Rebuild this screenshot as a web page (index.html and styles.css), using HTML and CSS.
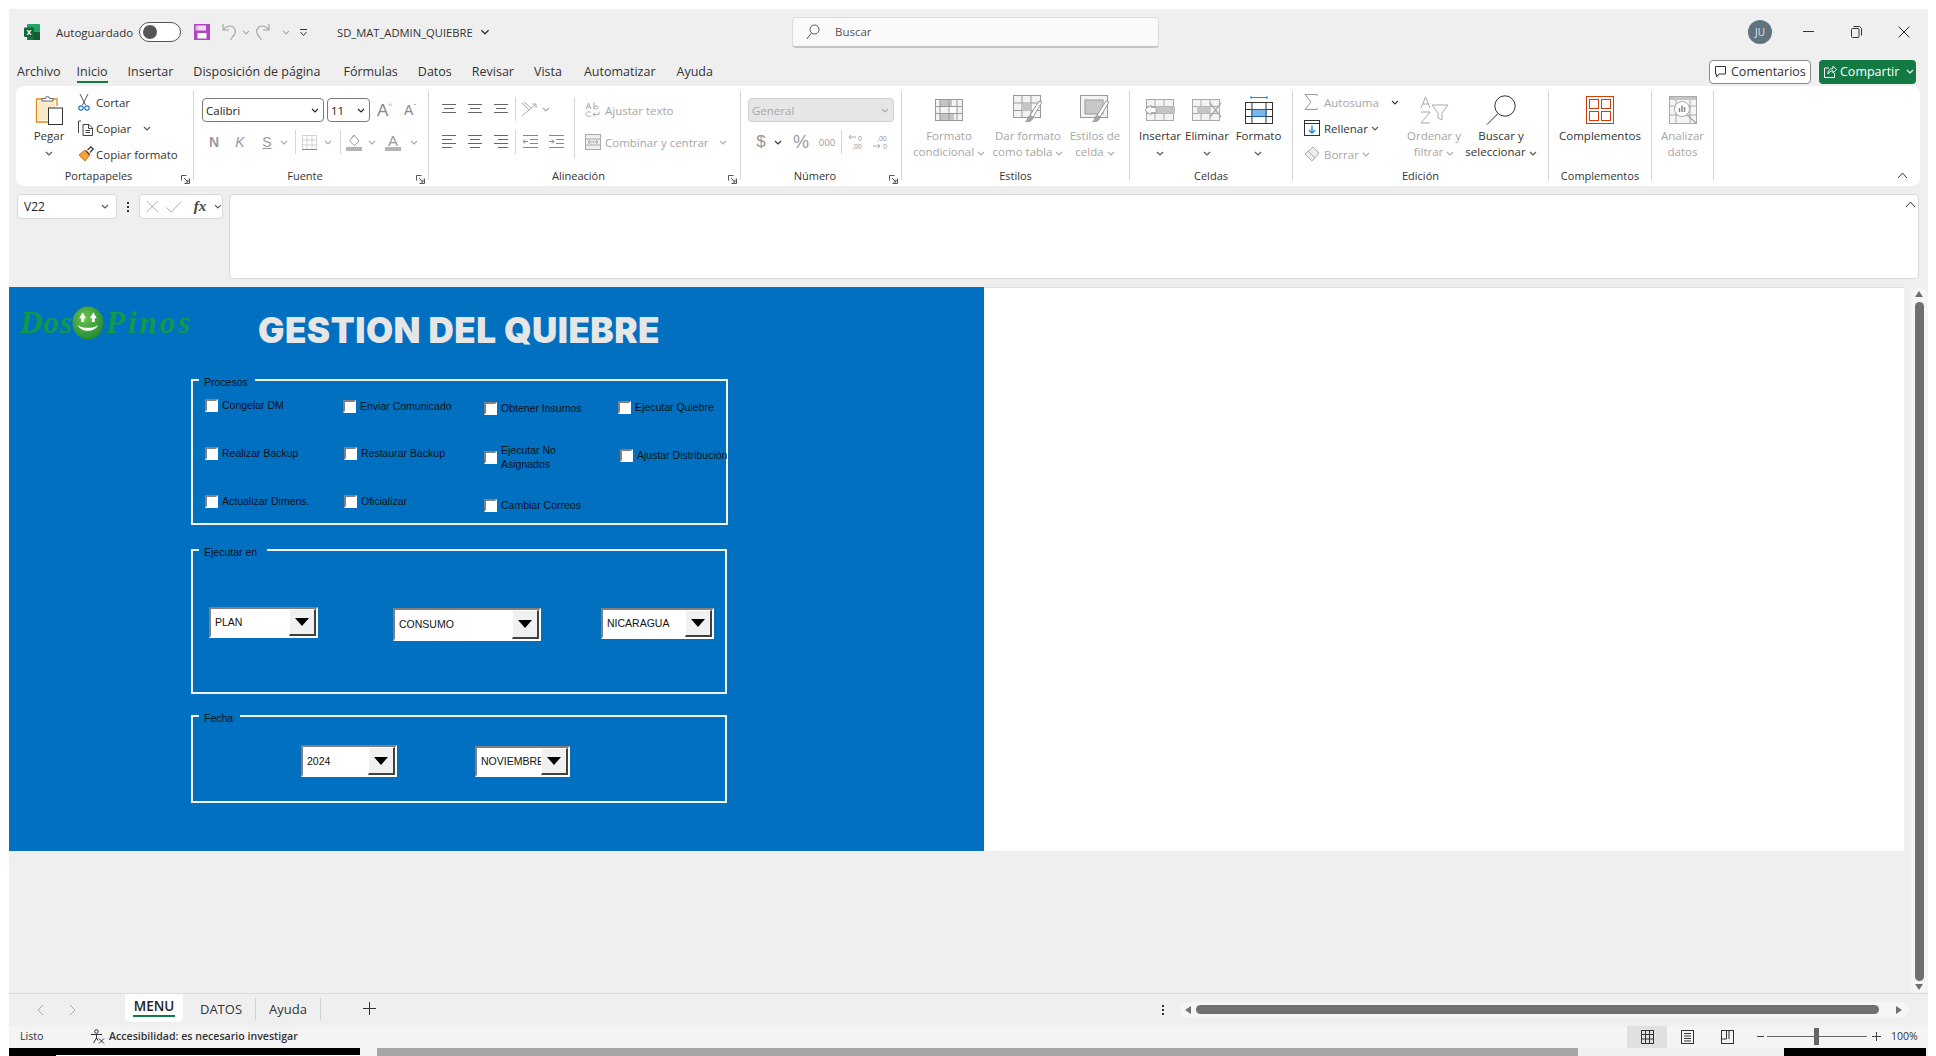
FILE: index.html
```html
<!DOCTYPE html>
<html lang="es">
<head>
    <meta charset="UTF-8">
    <title>SD_MAT_ADMIN_QUIEBRE - Excel</title>
    <link rel="stylesheet" href="styles.css">
</head>
<body>
    <!-- shared small icons -->
    <svg class="sprite">
        <symbol id="chev" viewBox="0 0 8 5"><polyline points="1,1 4,4 7,1" fill="none" stroke="currentColor" stroke-width="1.1"/></symbol>
        <symbol id="launch" viewBox="0 0 9 9"><path d="M.5 .5h5M.5 .5v5M8.5 3.5v5h-5M3 3l4 4M7 4.5v2.5h-2.5" fill="none" stroke="currentColor"/></symbol>
    </svg>

    <div class="window">
        <!-- title bar -->
        <header class="titlebar">
            <svg class="xl-logo" width="16" height="16" viewBox="0 0 16 16">
                <rect x="3" width="13" height="16" rx="1" fill="#21a366"/>
                <rect x="9" y="8" width="7" height="8" fill="#185c37"/>
                <rect x="3" y="8" width="6" height="8" fill="#107c41"/>
                <rect y="3.5" width="10" height="9.5" rx="1" fill="#0b6a37"/>
                <text x="2.5" y="11" class="xl-x">x</text>
            </svg>
            <span class="autosave">Autoguardado</span>
            <span class="toggle"><span class="toggle-dot"></span></span>
            <svg class="qa-save" width="16" height="16" viewBox="0 0 16 16"><rect width="16" height="16" fill="#b146c2"/><rect x="4" y="1.5" width="8" height="5" fill="#f3d9f7"/><rect x="1.5" y="1.5" width="2.5" height="5" fill="#e2b4ea"/><rect x="3.500" y="9" width="9" height="5.500" fill="#fff"/></svg>
            <svg class="qa-undo" width="16" height="18" viewBox="0 0 16 18" fill="none" stroke="#a3a3a3" stroke-width="1.1"><path d="M1 1v6h6M1.5 6.5C4 3 8 2 11 4c3.5 2.5 3 7-.5 10l-2 3"/></svg>
            <svg class="chev qa-c1 c-muted"><use href="#chev"/></svg>
            <svg class="qa-redo" width="16" height="18" viewBox="0 0 16 18" fill="none" stroke="#a3a3a3" stroke-width="1.1"><path d="M15 1v6H9M14.5 6.5C12 3 8 2 5 4 1.5 6.5 2 11 5.5 14l2 3"/></svg>
            <svg class="chev qa-c2 c-muted"><use href="#chev"/></svg>
            <svg class="qa-more" width="9" height="9" viewBox="0 0 9 9" fill="none" stroke="#333"><path d="M1 1.5h7M1.5 4l3 3.5 3-3.5"/></svg>
            <span class="filename">SD_MAT_ADMIN_QUIEBRE</span>
            <svg class="file-chev" width="10" height="6"><use href="#chev"/></svg>
            <div class="search">
                <svg width="14" height="16" viewBox="0 0 14 16" fill="none" stroke="#555"><circle cx="8.5" cy="5.5" r="4.500"/><path d="M5.5 9L.8 15"/></svg>
                <span>Buscar</span>
            </div>
            <span class="avatar">JU</span>
            <div class="winbtn"><svg width="11" height="2"><rect width="11" height="1" fill="#333"/></svg></div>
            <div class="winbtn"><svg width="11" height="12" viewBox="0 0 11 12" fill="none" stroke="#333"><rect x=".5" y="2.5" width="7.5" height="9" rx="1"/><path d="M2.5 .5h6l2 2v7"/></svg></div>
            <div class="winbtn"><svg width="12" height="12" viewBox="0 0 12 12" stroke="#333"><path d="M.5 .5l11 11M11.5 .5l-11 11"/></svg></div>
        </header>

        <!-- ribbon tabs -->
        <nav class="tabs">
            <span class="tab">Archivo</span>
            <span class="tab tab-active">Inicio</span>
            <span class="tab">Insertar</span>
            <span class="tab">Disposición de página</span>
            <span class="tab tab-formulas">Fórmulas</span>
            <span class="tab">Datos</span>
            <span class="tab">Revisar</span>
            <span class="tab">Vista</span>
            <span class="tab tab-auto">Automatizar</span>
            <span class="tab tab-help">Ayuda</span>
            <button class="btn-comments">
                <svg width="11" height="12" viewBox="0 0 11 12" fill="none" stroke="#333"><path d="M.5 .5h10v7.5H4L1.5 11V8h-1z"/></svg>
                Comentarios
            </button>
            <button class="btn-share">
                <svg width="13" height="13" viewBox="0 0 13 13" fill="none" stroke="#fff"><path d="M5 3H.5v9.5h10V8M4 9c0-4 2.5-5.500 5-5.500V1l3.5 3.500L9 8V5.800C7 5.800 5 7 4 9z"/></svg>
                Compartir
                <svg class="chev chev-share"><use href="#chev"/></svg>
            </button>
        </nav>

        <!-- ribbon -->
        <section class="ribbon">
            <div class="group g-clip">
                <div class="group-body">
                    <div class="big big-paste">
                        <div class="big-icon">
                            <svg width="28" height="30" viewBox="0 0 28 30" fill="none"><path d="M18 4h4v7M7 4H1.5v23H13" stroke="#e08a1e" stroke-width="1.3"/><rect x="3" y="5.5" width="17" height="20" fill="#fbe9c8"/><path d="M7 6V3.5h3.5a2 2 0 0 1 4 0H18V6z" fill="#fff" stroke="#666"/><rect x="13.5" y="13" width="14" height="16.5" fill="#fff" stroke="#333"/></svg>
                        </div>
                        <div class="big-text">Pegar<br><svg class="chev"><use href="#chev"/></svg></div>
                    </div>
                    <div class="small-col">
                        <div class="small-row">
                            <span class="small-icon"><svg width="12" height="17" viewBox="0 0 12 17" fill="none"><path d="M2 0l5.5 11M10 0L4.5 11" stroke="#555"/><circle cx="3" cy="14" r="2.2" stroke="#1a75c9" stroke-width="1.2"/><circle cx="9" cy="14" r="2.2" stroke="#1a75c9" stroke-width="1.2"/></svg></span>
                            <span>Cortar</span>
                        </div>
                        <div class="small-row">
                            <span class="small-icon"><svg width="16" height="16" viewBox="0 0 16 16" fill="none" stroke="#444"><path d="M3 1H.5v12M5 15.5V4.5h6l3.5 3.5v7.500zM10.5 4.5V8.500h4M7.5 10.5h4.500M7.5 12.5h4.500"/></svg></span>
                            <span>Copiar</span>
                            <svg class="chev chev-copy"><use href="#chev"/></svg>
                        </div>
                        <div class="small-row">
                            <span class="small-icon"><svg width="16" height="16" viewBox="0 0 16 16" fill="none"><path d="M1 9l6 6 5-6.5L7 4z" fill="#f2a33a" stroke="#d46f12"/><path d="M8 5l3.5 3.5M9.5 4L13 .8 15.2 3 12 6.5" stroke="#333" stroke-width="1.2"/></svg></span>
                            <span>Copiar formato</span>
                        </div>
                    </div>
                </div>
                <div class="group-label label-launch">Portapapeles</div>
                <svg class="launcher"><use href="#launch"/></svg>
            </div>

            <div class="group g-font">
                <div class="group-body body-col">
                    <div class="font-row1">
                        <div class="field field-name">Calibri<svg class="chev"><use href="#chev"/></svg></div>
                        <div class="field field-size">11<svg class="chev"><use href="#chev"/></svg></div>
                        <span class="glyph-a a-big">A<sup>^</sup></span>
                        <span class="glyph-a a-small">A<sup>ˇ</sup></span>
                    </div>
                    <div class="font-row2 c-muted">
                        <b class="letter">N</b>
                        <i class="letter">K</i>
                        <u class="letter">S</u>
                        <svg class="chev"><use href="#chev"/></svg>
                        <span class="vsep"></span>
                        <svg width="15" height="15" viewBox="0 0 15 15" fill="none" stroke="#aaa" stroke-dasharray="1 1"><rect x=".5" y=".5" width="14" height="14"/><path d="M5 .5v14M10 .5v14M.5 5h14M.5 10h14"/><path d="M0 14.5h15" stroke-dasharray="none" stroke="#888"/></svg>
                        <svg class="chev"><use href="#chev"/></svg>
                        <span class="vsep"></span>
                        <svg width="17" height="17" viewBox="0 0 17 17" fill="none" stroke="#999"><path d="M8 1l5 6-4.5 4.5L3.5 7z"/><path d="M6 4l2-3"/><rect y="13" width="16" height="4" fill="#b5b5b5" stroke="none"/></svg>
                        <svg class="chev"><use href="#chev"/></svg>
                        <span class="a-color">A</span>
                        <svg class="chev"><use href="#chev"/></svg>
                    </div>
                </div>
                <div class="group-label label-launch">Fuente</div>
                <svg class="launcher c-muted"><use href="#launch"/></svg>
            </div>

            <div class="group g-align">
                <div class="group-body">
                    <div class="body-col align-block">
                        <div class="align-row1">
                            <svg width="14" height="10" viewBox="0 0 14 10" stroke="#666"><path d="M0 .5h14M2 4.5h10M0 8.5h14"/></svg>
                            <svg width="14" height="10" viewBox="0 0 14 10" stroke="#666"><path d="M0 .5h14M2 4.5h10M0 8.5h14"/></svg>
                            <svg width="14" height="10" viewBox="0 0 14 10" stroke="#666"><path d="M0 .5h14M2 4.5h10M0 8.5h14"/></svg>
                            <span class="vsep"></span>
                            <svg width="16" height="16" viewBox="0 0 16 16" fill="none" stroke="#aaa"><path d="M1 2l7 7M3 1l7 6M1 15L15 3M15 3h-4M15 3v4"/></svg>
                            <svg class="chev c-muted"><use href="#chev"/></svg>
                        </div>
                        <div class="align-row2">
                            <svg width="14" height="14" viewBox="0 0 14 14" stroke="#666"><path d="M0 .5h14M0 4.5h10M0 8.5h14M0 12.5h10"/></svg>
                            <svg width="14" height="14" viewBox="0 0 14 14" stroke="#666"><path d="M0 .5h14M2 4.5h10M0 8.5h14M2 12.5h10"/></svg>
                            <svg width="14" height="14" viewBox="0 0 14 14" stroke="#666"><path d="M0 .5h14M4 4.5h10M0 8.5h14M4 12.5h10"/></svg>
                            <span class="vsep"></span>
                            <svg width="15" height="14" viewBox="0 0 15 14" fill="none" stroke="#888"><path d="M0 .5h15M7 4.5h8M7 8.5h8M0 12.5h15M5 6.5H0M2 4.5l-2 2 2 2"/></svg>
                            <svg width="15" height="14" viewBox="0 0 15 14" fill="none" stroke="#888"><path d="M0 .5h15M7 4.5h8M7 8.5h8M0 12.5h15M0 6.5h5M3 4.5l2 2-2 2"/></svg>
                        </div>
                    </div>
                    <span class="vsep vsep-tall"></span>
                    <div class="wrap-col c-muted">
                        <div class="wrap-row wrap-row-top">
                            <span class="wrap-icon">
                                <svg width="15" height="16" viewBox="0 0 15 16" fill="none" stroke="#aaa"><path d="M1 7l2.5-6L6 7M2 5h3M9 .5v6.5M9 5c1-1.5 4-1.5 4 .5s-3 2-4 .5M6 10.5C4 9 1 10 1 12s3 3.5 5 1.5M14 9.5v3H8M10 10.5l-2 2 2 2"/></svg>
                            </span>
                            <span>Ajustar texto</span>
                        </div>
                        <div class="wrap-row">
                            <span class="wrap-icon">
                                <svg width="16" height="16" viewBox="0 0 16 16" fill="none" stroke="#aaa"><rect x=".5" y=".5" width="15" height="15" fill="#eee"/><path d="M.5 5h15M.5 11h15M3 8h10M5 6l-2 2 2 2M11 6l2 2-2 2"/></svg>
                            </span>
                            <span>Combinar y centrar</span>
                            <svg class="chev chev-merge"><use href="#chev"/></svg>
                        </div>
                    </div>
                </div>
                <div class="group-label label-launch">Alineación</div>
                <svg class="launcher c-muted"><use href="#launch"/></svg>
            </div>

            <div class="group g-num">
                <div class="group-body body-col">
                    <div class="field field-general">General<svg class="chev"><use href="#chev"/></svg></div>
                    <div class="num-row c-muted">
                        <span class="sym-dollar">$</span>
                        <svg class="chev c-dark"><use href="#chev"/></svg>
                        <span class="sym-pct">%</span>
                        <span class="sym-000">000</span>
                        <span class="vsep"></span>
                        <svg width="16" height="16" viewBox="0 0 16 16" fill="none" stroke="#aaa"><path d="M8 3H1M3 1L1 3l2 2"/><text x="10" y="6.5" class="sym-dec">0</text><text x="4" y="15" class="sym-dec">,00</text></svg>
                        <svg width="16" height="16" viewBox="0 0 16 16" fill="none" stroke="#aaa"><text x="4" y="6.5" class="sym-dec">,00</text><path d="M0 12h7M5 10l2 2-2 2"/><text x="10" y="15" class="sym-dec">0</text></svg>
                    </div>
                </div>
                <div class="group-label label-launch">Número</div>
                <svg class="launcher c-muted"><use href="#launch"/></svg>
            </div>

            <div class="group g-styles">
                <div class="group-body big-grid c-muted">
                    <div class="big">
                        <div class="big-icon"><svg width="28" height="22" viewBox="0 0 28 22" fill="#f3f3f3" stroke="#999"><rect x=".5" y=".5" width="27" height="21"/><rect x="5" y="1" width="12" height="6.5" fill="#c4c4c4" stroke="none"/><rect x="5" y="14.5" width="14" height="6.5" fill="#c4c4c4" stroke="none"/><rect x="14" y="7.5" width="8" height="7" fill="#fff" stroke="none"/><path d="M5 .5v21M14 .5v21M22 .5v21M.5 7.5h27M.5 14.5h27" fill="none"/></svg></div>
                        <div class="big-text">Formato<br>condicional <svg class="chev"><use href="#chev"/></svg></div>
                    </div>
                    <div class="big">
                        <div class="big-icon"><svg width="30" height="34" viewBox="0 0 30 34" fill="none" stroke="#999"><rect x=".5" y="2.5" width="27" height="22" fill="#f3f3f3"/><path d="M9 2.5v22M18 2.5v22M.5 10h27M.5 17.5h27"/><rect x="9" y="10" width="9" height="8" fill="#c4c4c4" stroke="none"/><path d="M29 9L20 24l-3-1.5L26 8z" fill="#fff"/><path d="M15 24c2-2 4-1 4.5 1 0 3-4 4-7 3.5 1.5-1 2-2 2.5-4.5z" fill="#aaa"/></svg></div>
                        <div class="big-text">Dar formato<br>como tabla <svg class="chev"><use href="#chev"/></svg></div>
                    </div>
                    <div class="big">
                        <div class="big-icon"><svg width="30" height="34" viewBox="0 0 30 34" fill="none" stroke="#999"><rect x=".5" y="2.5" width="27" height="22" fill="#f3f3f3"/><rect x="5" y="7" width="18" height="14" fill="#c8c8c8"/><path d="M29 9L20 24l-3-1.5L26 8z" fill="#fff"/><path d="M15 24c2-2 4-1 4.5 1 0 3-4 4-7 3.5 1.5-1 2-2 2.5-4.5z" fill="#aaa"/></svg></div>
                        <div class="big-text">Estilos de<br>celda <svg class="chev"><use href="#chev"/></svg></div>
                    </div>
                </div>
                <div class="group-label">Estilos</div>
            </div>

            <div class="group g-cells">
                <div class="group-body big-grid">
                    <div class="big">
                        <div class="big-icon"><svg width="32" height="22" viewBox="0 0 32 22" fill="none" stroke="#aaa"><rect x="2.5" y=".5" width="27" height="21" fill="#f3f3f3"/><path d="M11 .5v21M20 .5v21M2.5 7.5h27M2.5 14.5h27"/><rect x="12" y="7.5" width="19" height="7" fill="#c4c4c4" stroke="none"/><path d="M12 8.5H7V6L1 11l6 5v-2.5h5z" fill="#fff"/></svg></div>
                        <div class="big-text">Insertar<br><svg class="chev"><use href="#chev"/></svg></div>
                    </div>
                    <div class="big">
                        <div class="big-icon"><svg width="30" height="22" viewBox="0 0 30 22" fill="none" stroke="#aaa"><rect x=".5" y=".5" width="27" height="21" fill="#f3f3f3"/><path d="M9 .5v21M18 .5v21M.5 7.5h27M.5 14.5h27"/><rect x="5" y="7.5" width="13" height="7" fill="#c4c4c4" stroke="none"/><path d="M18 4l11 14M29 4L18 18" stroke-width="1.3"/></svg></div>
                        <div class="big-text">Eliminar<br><svg class="chev"><use href="#chev"/></svg></div>
                    </div>
                    <div class="big">
                        <div class="big-icon"><svg width="28" height="28" viewBox="0 0 28 28" fill="none" stroke="#333"><path d="M6 1.5h16M6 0v3M22 0v3" stroke="#1a86d8"/><rect x=".5" y="6.5" width="27" height="21"/><path d="M7 6.5v21M21 6.5v21M.5 13.5h27M.5 20.5h27"/><rect x="7" y="13.5" width="14" height="7" fill="#7ab6e8" stroke="#1a5fa8"/></svg></div>
                        <div class="big-text">Formato<br><svg class="chev"><use href="#chev"/></svg></div>
                    </div>
                </div>
                <div class="group-label">Celdas</div>
            </div>

            <div class="group g-edit">
                <div class="group-body edit-body">
                    <div class="small-col edit-col">
                        <div class="small-row c-muted">
                            <span class="edit-icon"><svg width="14" height="16" viewBox="0 0 14 16" fill="none" stroke="#999"><path d="M13 2V.5H1L7 8l-6 7.5h12V14"/></svg></span>
                            <span>Autosuma</span>
                            <svg class="chev chev-sum c-dark"><use href="#chev"/></svg>
                        </div>
                        <div class="small-row">
                            <span class="edit-icon"><svg width="16" height="16" viewBox="0 0 16 16" fill="none" stroke="#333"><rect x=".5" y=".5" width="15" height="15" fill="#fff"/><path d="M.5 3.5h15"/><path d="M8 5.5v7.5M5 10l3 3 3-3" stroke="#1a86d8" stroke-width="1.3"/></svg></span>
                            <span>Rellenar</span>
                            <svg class="chev chev-tight"><use href="#chev"/></svg>
                        </div>
                        <div class="small-row c-muted">
                            <span class="edit-icon"><svg width="16" height="16" viewBox="0 0 16 16" fill="none" stroke="#aaa"><path d="M9 1l6 6-7 8-7-7z" fill="#eee"/><path d="M4 5l7 7" /></svg></span>
                            <span>Borrar</span>
                            <svg class="chev chev-tight"><use href="#chev"/></svg>
                        </div>
                    </div>
                    <div class="big c-muted">
                        <div class="big-icon"><svg width="29" height="28" viewBox="0 0 29 28" fill="none" stroke="#aaa"><path d="M1 12L5.5 1 10 12M2.5 8h6M1 16h9L1 27h9"/><path d="M12 9h16l-6 8v7l-4-2v-5z"/></svg></div>
                        <div class="big-text">Ordenar y<br>filtrar <svg class="chev"><use href="#chev"/></svg></div>
                    </div>
                    <div class="big">
                        <div class="big-icon"><svg width="30" height="30" viewBox="0 0 30 30" fill="none" stroke="#333"><circle cx="19" cy="11" r="10.2"/><path d="M12 18.5L1 29.5"/></svg></div>
                        <div class="big-text">Buscar y<br>seleccionar <svg class="chev"><use href="#chev"/></svg></div>
                    </div>
                </div>
                <div class="group-label">Edición</div>
            </div>

            <div class="group g-addin">
                <div class="group-body">
                    <div class="big big-fill">
                        <div class="big-icon"><svg width="28" height="28" viewBox="0 0 28 28" fill="none" stroke="#d83b01"><rect x=".5" y=".5" width="27" height="27"/><rect x="3.5" y="3.5" width="9" height="9"/><rect x="15.5" y="3.5" width="9" height="9"/><rect x="3.5" y="15.5" width="9" height="9"/><rect x="15.5" y="15.5" width="9" height="9"/></svg></div>
                        <div class="big-text">Complementos</div>
                    </div>
                </div>
                <div class="group-label">Complementos</div>
            </div>

            <div class="group g-analyze">
                <div class="group-body">
                    <div class="big big-fill c-muted">
                        <div class="big-icon"><svg width="28" height="28" viewBox="0 0 28 28" fill="none" stroke="#aaa"><rect x=".5" y=".5" width="27" height="27" fill="#f5f5f5"/><rect x="1" y="1" width="26" height="3" fill="#c4c4c4" stroke="none"/><path d="M1 10h26M1 19h26M7 4v23M21 4v23"/><circle cx="13" cy="13" r="7.5" fill="#fff"/><path d="M18 19l9 8" stroke-width="1.5"/><path d="M10.5 16v-4M13 16V9.5M15.5 16v-5" stroke-width="1.5" stroke="#888"/></svg></div>
                        <div class="big-text">Analizar<br>datos</div>
                    </div>
                </div>
            </div>

            <svg class="ribbon-collapse" width="11" height="7" viewBox="0 0 11 7" fill="none" stroke="#333"><path d="M1 6l4.5-5L10 6"/></svg>
        </section>

        <!-- formula bar -->
        <section class="formula-bar">
            <div class="name-box">V22<svg class="chev"><use href="#chev"/></svg></div>
            <div class="dots"><i></i><i></i><i></i></div>
            <div class="fx-box">
                <svg width="13" height="13" viewBox="0 0 13 13" stroke="#aaa"><path d="M.5 .5l12 12M12.5 .5l-12 12"/></svg>
                <svg width="16" height="12" viewBox="0 0 16 12" fill="none" stroke="#aaa"><path d="M.5 6.5L5.5 11.5 15.5 .5"/></svg>
                <span class="fx-text">fx</span>
                <svg class="chev"><use href="#chev"/></svg>
            </div>
            <div class="formula-input">
                <svg width="11" height="7" viewBox="0 0 11 7" fill="none" stroke="#333"><path d="M1 6l4.5-5L10 6"/></svg>
            </div>
        </section>

        <!-- worksheet -->
        <main class="sheet-area">
            <div class="sheet">
                <div class="canvas">
                    <div class="logo">
                        <span class="logo-text">Dos</span>
                        <svg width="32" height="34" viewBox="0 0 33 34">
                            <defs><radialGradient id="ball" cx=".4" cy=".35" r=".7"><stop offset="0" stop-color="#6cc04a"/><stop offset="1" stop-color="#1f8a35"/></radialGradient></defs>
                            <ellipse cx="16.5" cy="17" rx="16" ry="17" fill="url(#ball)"/>
                            <path d="M11 6l3.5 6H12.5v4h-3v-4H7.5zM22 6l3.5 6H23.5v4h-3v-4H18.5z" fill="#fff"/>
                            <path d="M6 19c2.5 8 18 8 21 0-5 4-16 4-21 0z" fill="#fff"/>
                        </svg>
                        <span class="logo-text logo-pinos">Pinos</span>
                    </div>
                    <h1 class="page-title">GESTION DEL QUIEBRE</h1>

                    <fieldset class="frame frame-proc"><legend class="legend-proc">Procesos</legend></fieldset>
                    <fieldset class="frame frame-run"><legend class="legend-run">Ejecutar en</legend></fieldset>
                    <fieldset class="frame frame-date"><legend class="legend-date">Fecha</legend></fieldset>

                    <label class="check c1"><span class="box"></span>Congelar DM</label>
                    <label class="check c2"><span class="box"></span>Enviar Comunicado</label>
                    <label class="check c3"><span class="box"></span>Obtener Insumos</label>
                    <label class="check c4"><span class="box"></span>Ejecutar Quiebre</label>
                    <label class="check c5"><span class="box"></span>Realizar Backup</label>
                    <label class="check c6"><span class="box"></span>Restaurar Backup</label>
                    <label class="check c7"><span class="box"></span><span>Ejecutar No<br>Asignados</span></label>
                    <label class="check c8"><span class="box"></span>Ajustar Distribución</label>
                    <label class="check c9"><span class="box"></span>Actualizar Dimens.</label>
                    <label class="check c10"><span class="box"></span>Oficializar</label>
                    <label class="check c11"><span class="box"></span>Cambiar Correos</label>

                    <div class="combo combo-plan"><span class="combo-text">PLAN</span><span class="combo-btn"></span></div>
                    <div class="combo combo-cons"><span class="combo-text">CONSUMO</span><span class="combo-btn"></span></div>
                    <div class="combo combo-pais"><span class="combo-text">NICARAGUA</span><span class="combo-btn"></span></div>
                    <div class="combo combo-year"><span class="combo-text">2024</span><span class="combo-btn"></span></div>
                    <div class="combo combo-month"><span class="combo-text">NOVIEMBRE</span><span class="combo-btn"></span></div>
                </div>
            </div>
            <div class="vscroll">
                <span class="tri tri-up"></span>
                <span class="vthumb"></span>
                <span class="tri tri-down"></span>
            </div>
        </main>

        <!-- sheet tabs -->
        <section class="sheetbar">
            <svg class="nav-prev" width="7" height="12" viewBox="0 0 7 12" fill="none" stroke="#aaa"><path d="M6 1L1 6l5 5"/></svg>
            <svg class="nav-next" width="7" height="12" viewBox="0 0 7 12" fill="none" stroke="#aaa"><path d="M1 1l5 5-5 5"/></svg>
            <div class="stab stab-active"><span>MENU</span></div>
            <div class="stab stab-datos">DATOS</div>
            <div class="stab stab-ayuda">Ayuda</div>
            <svg class="add-sheet" width="13" height="13" stroke="#333"><path d="M6.5 0v13M0 6.5h13"/></svg>
            <div class="dots dots-h"><i></i><i></i><i></i></div>
            <div class="hscroll">
                <span class="tri tri-left"></span>
                <span class="hthumb"></span>
                <span class="tri tri-right"></span>
            </div>
        </section>

        <!-- status bar -->
        <footer class="statusbar">
            <span class="st-ready">Listo</span>
            <svg class="st-acc" width="15" height="15" viewBox="0 0 15 15" fill="none" stroke="#333"><circle cx="6.5" cy="2.5" r="1.8"/><path d="M1 5.5h11M6.5 5v4M6.5 9l-3 5M6.5 9l1.5 2.5M9 9.5l5 5M14 9.5l-5 5"/></svg>
            <span class="st-acc-text">Accesibilidad: es necesario investigar</span>
            <div class="view view-on"><svg width="13" height="14" viewBox="0 0 13 14" fill="none" stroke="#333"><rect x=".5" y=".5" width="12" height="13"/><path d="M4.5 .5v13M8.5 .5v13M.5 4.5h12M.5 9h12"/></svg></div>
            <div class="view"><svg width="13" height="14" viewBox="0 0 13 14" fill="none" stroke="#333"><rect x=".5" y=".5" width="12" height="13"/><path d="M3 3.5h7M3 6h7M3 8.5h7M3 11h7"/></svg></div>
            <div class="view"><svg width="13" height="14" viewBox="0 0 13 14" fill="none" stroke="#333"><rect x=".5" y=".5" width="12" height="13"/><path d="M.5 9h5V.5M8 .5V9"/></svg></div>
            <span class="zoom-minus"></span>
            <div class="zoom-track"><span class="zoom-thumb"></span></div>
            <svg class="zoom-plus" width="9" height="9" stroke="#444"><path d="M4.5 0v9M0 4.5h9"/></svg>
            <span class="zoom-pct">100%</span>
        </footer>

        <!-- edge of the window behind -->
        <div class="strip">
            <span class="s-black s-a"></span>
            <span class="s-black s-b"></span>
            <span class="s-notch"></span>
            <span class="s-grey"></span>
            <span class="s-light"></span>
            <span class="s-black s-c"></span>
        </div>
    </div>
</body>
</html>
```

FILE: styles.css
```css
* {
    box-sizing: border-box;
}
html, body {
    margin: 0;
    height: 100%;
    overflow: hidden;
    background-color: #fff;
}
body {
    padding: 9px 0 0 9px;
    font-family: "Open Sans", "Liberation Sans", sans-serif;
    font-size: 11.5px;
    color: #333;
}
.sprite {
    display: none;
}
.window {
    width: 1919px;
    height: 1047px;
    background-color: #efefef;
    display: flex;
    flex-direction: column;
}
.chev {
    width: 8px;
    height: 5px;
    color: #555;
}
.c-muted {
    color: #a6a6a6;
}
.c-muted .chev, .chev.c-muted {
    color: #aaa;
}
.chev.c-dark {
    color: #333;
}

/* title bar */
.titlebar {
    height: 50px;
    flex: none;
    display: flex;
    align-items: center;
    padding: 0 0 4px 15px;
}
.xl-x {
    font-family: "Liberation Sans", sans-serif;
    font-size: 9px;
    font-weight: bold;
    fill: #fff;
}
.autosave {
    margin-left: 16px;
    width: 83px;
    font-size: 11.5px;
}
.toggle {
    width: 42px;
    height: 20px;
    border: 1.5px solid #555;
    border-radius: 10px;
    background-color: #fff;
    display: flex;
    align-items: center;
    padding-left: 3px;
}
.toggle-dot {
    width: 14px;
    height: 14px;
    border-radius: 50%;
    background-color: #555;
}
.qa-save {
    margin-left: 13px;
}
.qa-undo {
    margin-left: 12px;
}
.qa-c1 {
    margin-left: 4px;
}
.qa-redo {
    margin-left: 4px;
}
.qa-c2 {
    margin-left: 12px;
}
.qa-more {
    margin-left: 9px;
}
.filename {
    margin-left: 29px;
    width: 141px;
    font-size: 11.2px;
    white-space: nowrap;
}
.file-chev {
    color: #333;
    margin-left: 2px;
}
.search {
    margin-left: 302px;
    width: 367px;
    height: 31px;
    background-color: #fafafa;
    border: 1px solid #dcdcdc;
    border-bottom: 2px solid #c4c4c4;
    border-radius: 4px;
    display: flex;
    align-items: center;
    gap: 15px;
    padding-left: 13px;
    color: #555;
    font-size: 11.5px;
}
.avatar {
    margin-left: auto;
    margin-right: 12px;
    width: 24px;
    height: 24px;
    border-radius: 50%;
    background-color: #607480;
    color: #dfe5e8;
    font-size: 10px;
    display: flex;
    align-items: center;
    justify-content: center;
}
.winbtn {
    width: 48px;
    display: flex;
    align-items: center;
    justify-content: center;
}

/* ribbon tabs */
.tabs {
    height: 27px;
    flex: none;
    display: flex;
    align-items: center;
    gap: 20px;
    padding: 0 12px 2px 8px;
    font-size: 12.5px;
}
.tab {
    position: relative;
    white-space: nowrap;
}
.tab-active {
    margin-left: -4px;
}
.tab-formulas {
    margin-left: 3px;
}
.tab-auto {
    margin-left: 2px;
}
.tab-help {
    margin-left: 1px;
}
.tab-active::after {
    content: "";
    position: absolute;
    left: 0;
    right: 0;
    bottom: -3px;
    height: 2px;
    background-color: #107c41;
}
.btn-comments, .btn-share {
    height: 24px;
    border-radius: 4px;
    font-family: inherit;
    font-size: 12.5px;
    display: flex;
    align-items: center;
    padding: 0;
}
.btn-comments {
    margin-left: auto;
    width: 102px;
    gap: 5px;
    padding-left: 5px;
    background-color: #fff;
    color: #333;
    border: 1px solid #8a8a8a;
}
.btn-share {
    margin-left: -12px;
    width: 97px;
    gap: 3px;
    padding-left: 5px;
    background-color: #137a43;
    color: #fff;
    border: none;
}
.chev-share {
    color: #fff;
    margin-left: 4px;
}

/* ribbon */
.ribbon {
    position: relative;
    height: 100px;
    flex: none;
    margin: 0 8px 0 7px;
    background-color: #fff;
    border-radius: 8px;
    display: flex;
    padding-top: 5px;
}
.group {
    position: relative;
    height: 89px;
    border-right: 1px solid #d4d4d4;
    display: flex;
    flex-direction: column;
    flex: none;
}
.g-clip { width: 178px; }
.g-font { width: 235px; }
.g-align { width: 312px; }
.g-num { width: 161px; }
.g-styles { width: 228px; }
.g-cells { width: 163px; }
.g-edit { width: 256px; }
.g-addin { width: 103px; }
.g-analyze { width: 62px; }

.group-body {
    height: 76px;
    display: flex;
}
.body-col {
    flex-direction: column;
}
.group-label {
    height: 18px;
    margin-bottom: -5px;
    line-height: 18px;
    font-size: 11px;
    text-align: center;
    white-space: nowrap;
}
.label-launch {
    padding-right: 12px;
}
.launcher {
    position: absolute;
    right: 3px;
    bottom: -4px;
    width: 9px;
    height: 9px;
    color: #555;
}
.ribbon-collapse {
    position: absolute;
    right: 12px;
    top: 86px;
}

/* large ribbon buttons */
.big {
    display: flex;
    flex-direction: column;
    align-items: center;
    white-space: nowrap;
}
.big-fill {
    flex: 1;
}
.big-icon {
    height: 37px;
    display: flex;
    align-items: center;
    justify-content: center;
}
.big-text {
    line-height: 16px;
    text-align: center;
}
.big-grid {
    display: grid;
}
.g-styles .big-grid {
    grid-template-columns: 94px 64px 70px;
}
.g-cells .big-grid {
    grid-template-columns: 60px 34px 69px;
}

/* small ribbon rows */
.small-col {
    display: flex;
    flex-direction: column;
    gap: 2px;
    margin-top: -1px;
}
.small-row {
    height: 24px;
    display: flex;
    align-items: center;
    white-space: nowrap;
}
.small-icon {
    width: 18px;
}
.small-icon svg, .edit-icon svg, .wrap-icon svg {
    display: block;
}
.big-paste {
    width: 40px;
    margin-left: 13px;
}
.g-clip .small-col {
    margin-left: 9px;
}
.chev-copy {
    margin-left: 12px;
}

/* font group */
.font-row1 {
    display: flex;
    align-items: center;
    height: 24px;
    margin: 7px 0 0 8px;
}
.field {
    height: 24px;
    border: 1px solid #7a7a7a;
    border-radius: 4px;
    display: flex;
    align-items: center;
    justify-content: space-between;
    padding: 0 4px 0 3px;
    font-size: 11.5px;
    color: #222;
}
.field .chev {
    color: #222;
}
.field-name {
    width: 122px;
}
.field-size {
    width: 43px;
    margin-left: 3px;
}
.glyph-a {
    color: #888;
    font-family: "Liberation Sans", sans-serif;
    display: flex;
    line-height: 1;
}
.glyph-a sup {
    font-size: 8px;
    line-height: 1;
}
.a-big {
    font-size: 17px;
    margin-left: 7px;
}
.a-small {
    font-size: 14px;
    margin-left: 12px;
}
.font-row2 {
    display: grid;
    grid-template-columns: 24px 28px 26px 8px 14px 15px 22px 2px 26px 10px 32px 10px;
    align-items: center;
    justify-items: center;
    height: 24px;
    margin: 8px 0 0 8px;
}
.letter {
    font-family: "Liberation Sans", sans-serif;
    font-size: 14px;
    color: #999;
}
.vsep {
    width: 1px;
    height: 24px;
    background-color: #d4d4d4;
}
.a-color {
    font-family: "Liberation Sans", sans-serif;
    font-size: 15px;
    line-height: 13px;
    width: 16px;
    text-align: center;
    color: #999;
    border-bottom: 4px solid #b5b5b5;
}

/* alignment group */
.align-block {
    display: flex;
    width: 138px;
    margin-left: 7px;
    flex: none;
}
.align-row1, .align-row2 {
    display: grid;
    align-items: center;
    justify-items: center;
    height: 24px;
}
.align-row1 {
    grid-template-columns: 26px 26px 26px 2px 26px 8px;
    margin-top: 6px;
}
.align-row2 {
    grid-template-columns: 26px 26px 26px 2px 28px 24px;
    margin-top: 9px;
}
.vsep-tall {
    height: 62px;
    margin-top: 6px;
    flex: none;
}
.wrap-col {
    margin-left: 10px;
    display: flex;
    flex-direction: column;
}
.wrap-row {
    height: 24px;
    display: flex;
    align-items: center;
    white-space: nowrap;
}
.wrap-row-top {
    margin: 7px 0 8px;
}
.wrap-icon {
    width: 20px;
}
.chev-merge {
    margin-left: 10px;
}

/* number group */
.g-num .group-body {
    padding: 7px 0 0 7px;
}
.field-general {
    width: 146px;
    background-color: #e6e6e6;
    border-color: #d0d0d0;
    color: #a6a6a6;
}
.field-general .chev {
    color: #aaa;
}
.num-row {
    display: grid;
    grid-template-columns: 26px 8px 38px 14px 14px 16px 34px;
    align-items: center;
    justify-items: center;
    height: 24px;
    margin-top: 8px;
}
.sym-dollar {
    font-family: "Liberation Sans", sans-serif;
    font-size: 17px;
    color: #999;
}
.sym-pct {
    font-family: "Liberation Sans", sans-serif;
    font-size: 18px;
    color: #999;
}
.sym-000 {
    font-size: 9.5px;
    color: #999;
}
.sym-dec {
    font-family: "Liberation Sans", sans-serif;
    font-size: 7px;
    fill: #999;
    stroke: none;
}

/* edit group */
.edit-body {
    display: grid;
    grid-template-columns: 96px 68px 66px;
    padding-left: 11px;
}
.edit-icon {
    width: 20px;
}
.chev-sum {
    margin-left: 12px;
}
.chev-tight {
    margin-left: 3px;
}

/* formula bar */
.formula-bar {
    height: 101px;
    flex: none;
    display: flex;
    align-items: flex-start;
    padding: 8px 0 0 8px;
}
.name-box, .fx-box {
    height: 25px;
    background-color: #fff;
    border: 1px solid #d9d9d9;
    border-radius: 4px;
    display: flex;
    align-items: center;
}
.name-box {
    width: 100px;
    justify-content: space-between;
    padding: 0 7px 0 6px;
    font-size: 12px;
    color: #222;
}
.dots {
    width: 22px;
    height: 25px;
    display: flex;
    flex-direction: column;
    align-items: center;
    justify-content: center;
    gap: 2px;
}
.dots i {
    width: 2px;
    height: 2px;
    background-color: #333;
}
.fx-box {
    width: 84px;
    gap: 8px;
    padding-left: 6px;
}
.fx-text {
    font-family: "Liberation Serif", serif;
    font-style: italic;
    font-weight: bold;
    font-size: 15px;
    color: #444;
    margin-left: 4px;
}
.formula-input {
    width: 1690px;
    height: 85px;
    margin-left: 6px;
    background-color: #fff;
    border: 1px solid #d9d9d9;
    border-radius: 4px;
    display: flex;
    justify-content: flex-end;
    padding: 6px 2px 0 0;
}
.formula-input svg {
    display: block;
}

/* worksheet */
.sheet-area {
    height: 707px;
    flex: none;
    display: flex;
    border-bottom: 1px solid #dcdcdc;
}
.sheet {
    width: 1896px;
    height: 564px;
    background-color: #fff;
    border-top: 1px solid #e0e0e0;
}
.canvas {
    position: relative;
    width: 975px;
    height: 564px;
    margin-top: -1px;
    background-color: #0170c1;
}
.logo {
    position: absolute;
    left: 11px;
    top: 19px;
    display: flex;
    align-items: center;
}
.logo-text {
    width: 52px;
    font-family: "Liberation Serif", serif;
    font-style: italic;
    font-weight: bold;
    font-size: 31px;
    line-height: 34px;
    color: #0f9a47;
    letter-spacing: 1px;
    white-space: nowrap;
}
.logo-pinos {
    width: 86px;
    letter-spacing: 3px;
    margin-left: 2px;
}
.page-title {
    position: absolute;
    left: 249px;
    top: 25px;
    margin: 0;
    font-family: Inter, "Open Sans", sans-serif;
    font-weight: 900;
    font-size: 35px;
    line-height: 36px;
    letter-spacing: .5px;
    color: #e6e6e6;
    white-space: nowrap;
}

/* group boxes */
.frame {
    position: absolute;
    margin: 0;
    padding: 0;
    border: 2px solid #f2f2f2;
    min-width: 0;
}
.frame legend {
    padding: 4px 0 0 5px;
    margin-left: 6px;
    font-family: "Liberation Sans", sans-serif;
    font-size: 10.5px;
    line-height: 12px;
    color: #111;
}
.frame-proc {
    left: 182px;
    top: 85px;
    width: 537px;
    height: 153px;
}
.frame-run {
    left: 182px;
    top: 255px;
    width: 536px;
    height: 152px;
}
.frame-date {
    left: 182px;
    top: 421px;
    width: 536px;
    height: 95px;
}
.legend-proc {
    width: 56px;
}
.legend-run {
    width: 68px;
}
.legend-date {
    width: 41px;
}

/* check boxes, dropped on the sheet by hand */
.check {
    position: absolute;
    display: flex;
    align-items: center;
    gap: 4px;
    font-family: "Liberation Sans", sans-serif;
    font-size: 10.5px;
    line-height: 14px;
    color: #111;
    white-space: nowrap;
}
.box {
    width: 13px;
    height: 13px;
    flex: none;
    background-color: #fff;
    border: 2px solid;
    border-color: #808080 #fff #fff #808080;
}
.c1 { left: 196px; top: 111px; }
.c2 { left: 334px; top: 112px; }
.c3 { left: 475px; top: 114px; }
.c4 { left: 609px; top: 113px; }
.c5 { left: 196px; top: 159px; }
.c6 { left: 335px; top: 159px; }
.c7 { left: 475px; top: 156px; }
.c8 { left: 611px; top: 161px; }
.c9 { left: 196px; top: 207px; }
.c10 { left: 335px; top: 207px; }
.c11 { left: 475px; top: 211px; }

/* combo boxes */
.combo {
    position: absolute;
    display: flex;
    background-color: #fff;
    border: 2px solid;
    border-color: #808080 #fff #fff #808080;
}
.combo-text {
    flex: 1;
    min-width: 0;
    overflow: hidden;
    padding: 0 0 1px 4px;
    display: flex;
    align-items: center;
    font-family: "Liberation Sans", sans-serif;
    font-size: 10.5px;
    color: #111;
}
.combo-btn {
    width: 27px;
    flex: none;
    background-color: #f0f0f0;
    border: 1px solid;
    border-color: #fff #404040 #404040 #fff;
    border-width: 1px 2px 2px 1px;
    display: flex;
    align-items: center;
    justify-content: center;
}
.combo-btn::after {
    content: "";
    border-left: 7px solid transparent;
    border-right: 7px solid transparent;
    border-top: 8px solid #000;
}
.combo-plan { left: 200px; top: 320px; width: 109px; height: 31px; }
.combo-cons { left: 384px; top: 321px; width: 148px; height: 33px; }
.combo-pais { left: 592px; top: 321px; width: 113px; height: 31px; }
.combo-year { left: 292px; top: 458px; width: 96px; height: 32px; }
.combo-month { left: 466px; top: 459px; width: 95px; height: 31px; }

/* scroll bars */
.vscroll {
    width: 18px;
    margin: 0 0 0 6px;
    height: 706px;
    background-color: #f5f5f5;
    border-radius: 9px;
    display: flex;
    flex-direction: column;
    align-items: center;
    padding-top: 4px;
}
.tri {
    width: 0;
    height: 0;
    flex: none;
}
.tri-up {
    border-left: 4.5px solid transparent;
    border-right: 4.5px solid transparent;
    border-bottom: 6px solid #707070;
}
.tri-down {
    margin-top: 3px;
    border-left: 4.5px solid transparent;
    border-right: 4.5px solid transparent;
    border-top: 6px solid #707070;
}
.vthumb {
    width: 9px;
    height: 679px;
    margin-top: 5px;
    border-radius: 5px;
    background-color: #707070;
}
.sheetbar {
    position: relative;
    height: 32px;
    flex: none;
    display: flex;
    align-items: flex-start;
    padding-left: 28px;
}
.nav-prev {
    margin-top: 10px;
}
.nav-next {
    margin: 10px 0 0 25px;
}
.stab {
    height: 22px;
    margin-top: 4px;
    font-size: 13px;
    line-height: 22px;
    border-right: 1px solid #d0d0d0;
    color: #333;
    text-align: center;
}
.stab-active {
    width: 58px;
    height: 28px;
    margin: 0 4px 0 49px;
    background-color: #fff;
    border: none;
    border-radius: 0 0 5px 5px;
    display: flex;
    justify-content: center;
    font-weight: 600;
    font-size: 13.5px;
    color: #222;
}
.stab-active span {
    height: 23px;
    line-height: 25px;
    border-bottom: 2px solid #107c41;
    padding: 0 1px;
}
.stab-datos {
    width: 69px;
}
.stab-ayuda {
    width: 65px;
}
.add-sheet {
    margin: 8px 0 0 42px;
}
.dots-h {
    margin: 3px 0 0 776px;
}
.hscroll {
    width: 729px;
    height: 15px;
    margin: 8px 0 0 6px;
    background-color: #f5f5f5;
    border-radius: 8px;
    display: flex;
    align-items: center;
    padding-left: 5px;
}
.tri-left {
    border-top: 4.5px solid transparent;
    border-bottom: 4.5px solid transparent;
    border-right: 6px solid #707070;
}
.tri-right {
    margin-left: 17px;
    border-top: 4.5px solid transparent;
    border-bottom: 4.5px solid transparent;
    border-left: 6px solid #707070;
}
.hthumb {
    width: 683px;
    height: 9px;
    margin-left: 5px;
    border-radius: 5px;
    background-color: #707070;
}

/* status bar */
.statusbar {
    height: 22px;
    flex: none;
    background-color: #f4f4f4;
    display: flex;
    align-items: center;
    font-size: 10.6px;
    padding: 0 0 2px 11px;
}
.st-ready {
    width: 70px;
}
.st-acc-text {
    margin-left: 4px;
    font-weight: 600;
    width: 1518px;
    white-space: nowrap;
}
.view {
    width: 40px;
    height: 22px;
    margin-bottom: -2px;
    display: flex;
    align-items: center;
    justify-content: center;
    flex: none;
}
.view-on {
    background-color: #e0e0e0;
}
.zoom-minus {
    width: 7px;
    height: 1px;
    flex: none;
    margin-left: 10px;
    background-color: #444;
}
.zoom-track {
    position: relative;
    width: 100px;
    height: 1px;
    flex: none;
    margin-left: 3px;
    background-color: #666;
}
.zoom-thumb {
    position: absolute;
    left: 47px;
    top: -8px;
    width: 5px;
    height: 17px;
    background-color: #666;
}
.zoom-plus {
    margin-left: 5px;
    flex: none;
}
.zoom-pct {
    margin-left: 10px;
    font-size: 10.5px;
    white-space: nowrap;
}

/* edge of whatever window lies behind */
.strip {
    height: 8px;
    flex: none;
    display: flex;
    background-color: #f0f0f0;
}
.s-black {
    background-color: #000;
    flex: none;
}
.s-a { width: 47px; }
.s-b { width: 304px; border-bottom: 1px solid #fff; }
.s-c { width: 142px; }
.s-notch { width: 17px; background-color: #f4f4f4; }
.s-grey { width: 1201px; background-color: #a5a5a5; }
.s-light { width: 206px; }
```
